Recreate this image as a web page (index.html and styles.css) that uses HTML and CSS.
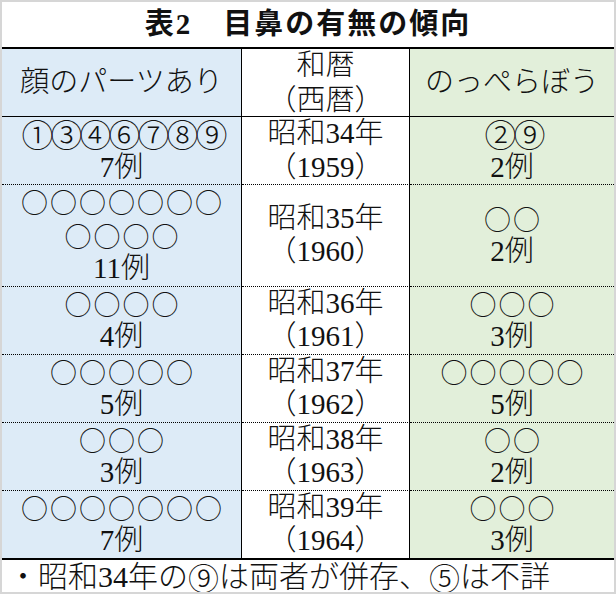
FILE: index.html
```html
<!DOCTYPE html>
<html lang="ja">
<head>
<meta charset="utf-8">
<title>表2 目鼻の有無の傾向</title>
<link rel="stylesheet" href="styles.css">
</head>
<body>
<div class="frame">
  <div class="title">表2　目鼻の有無の傾向</div>
  <div class="grid">
    <div class="cell head blue"><div class="l">顔のパーツあり</div></div>
    <div class="cell head mid"><div class="l">和暦</div><div class="l">（西暦）</div></div>
    <div class="cell head green last"><div class="l">のっぺらぼう</div></div>

    <div class="cell row blue"><div class="l n">①③④⑥⑦⑧⑨</div><div class="l">7例</div></div>
    <div class="cell row mid"><div class="l">昭和34年</div><div class="l">（1959）</div></div>
    <div class="cell row green last"><div class="l n">②⑨</div><div class="l">2例</div></div>

    <div class="cell row blue"><div class="l c">○○○○○○○</div><div class="l c">○○○○</div><div class="l">11例</div></div>
    <div class="cell row mid"><div class="l">昭和35年</div><div class="l">（1960）</div></div>
    <div class="cell row green last"><div class="l c">○○</div><div class="l">2例</div></div>

    <div class="cell row blue"><div class="l c">○○○○</div><div class="l">4例</div></div>
    <div class="cell row mid"><div class="l">昭和36年</div><div class="l">（1961）</div></div>
    <div class="cell row green last"><div class="l c">○○○</div><div class="l">3例</div></div>

    <div class="cell row blue"><div class="l c">○○○○○</div><div class="l">5例</div></div>
    <div class="cell row mid"><div class="l">昭和37年</div><div class="l">（1962）</div></div>
    <div class="cell row green last"><div class="l c">○○○○○</div><div class="l">5例</div></div>

    <div class="cell row blue"><div class="l c">○○○</div><div class="l">3例</div></div>
    <div class="cell row mid"><div class="l">昭和38年</div><div class="l">（1963）</div></div>
    <div class="cell row green last"><div class="l c">○○</div><div class="l">2例</div></div>

    <div class="cell row final blue"><div class="l c">○○○○○○○</div><div class="l">7例</div></div>
    <div class="cell row final mid"><div class="l">昭和39年</div><div class="l">（1964）</div></div>
    <div class="cell row final green last"><div class="l c">○○○</div><div class="l">3例</div></div>
  </div>
  <div class="note">・昭和34年の<span class="sn">⑨</span>は両者が併存、<span class="sn">⑤</span>は不詳</div>
</div>
</body>
</html>
```

FILE: styles.css
```css
html, body {
  margin: 0;
  padding: 0;
  background: #ffffff;
}

.frame {
  width: 616px;
  height: 594px;
  box-sizing: border-box;
  border: 2px solid #d6d6d6;
  display: flex;
  flex-direction: column;
  overflow: hidden;
  font-family: "Liberation Serif", "Noto Sans CJK JP", serif;
  font-size: 29px;
  font-weight: 300;
  color: #111111;
}

.title {
  height: 45px;
  line-height: 45px;
  text-align: center;
  font-weight: 700;
  letter-spacing: 2px;
  border-bottom: 2px solid #000000;
  flex: none;
}

.grid {
  display: grid;
  grid-template-columns: 240px 168px 1fr;
  border-bottom: 2px solid #000000;
  flex: none;
}

.cell {
  display: flex;
  flex-direction: column;
  justify-content: center;
  align-items: center;
  text-align: center;
  border-right: 1px solid #000000;
  white-space: nowrap;
}

.l {
  height: 33.5px;
  line-height: 33.5px;
}

.cell.last {
  border-right: none;
}

.head {
  height: 67px;
  border-bottom: 1px solid #000000;
}

.head.mid .l {
  height: 35px;
  line-height: 35px;
}

.row {
  border-bottom: 1px dotted #000000;
}

.row.final {
  border-bottom: none;
}

.blue {
  background: #ddebf7;
}

.green {
  background: #e2efda;
}

.mid {
  background: #ffffff;
}

.c {
  font-family: "Noto Sans CJK JP", sans-serif;
  font-weight: 300;
  font-size: 27px;
  letter-spacing: 2px;
  padding-left: 2px;
}

.n {
  font-family: "Noto Sans CJK JP", sans-serif;
  font-weight: 300;
  font-size: 32px;
  letter-spacing: -3px;
  padding-left: 3px;
}

.sn {
  font-family: "Noto Sans CJK JP", sans-serif;
  font-size: 31px;
}

.note {
  flex: 1;
  display: flex;
  align-items: center;
  padding-left: 6px;
  font-size: 30px;
  line-height: 33px;
}
```
